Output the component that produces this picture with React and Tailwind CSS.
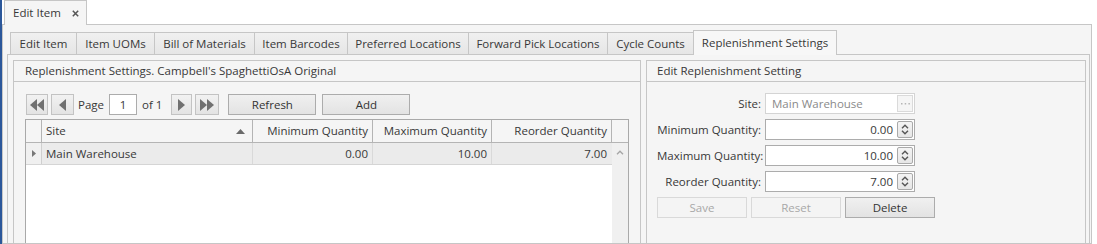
import React from "react";

const DoubleLeft = () => (
  <svg width="14" height="12" viewBox="0 0 14 12"><polygon points="7,0 0,6 7,12" fill="#707070" /><polygon points="14,0 7,6 14,12" fill="#707070" /></svg>
);
const SingleLeft = () => (
  <svg width="7" height="12" viewBox="0 0 7 12"><polygon points="7,0 0,6 7,12" fill="#707070" /></svg>
);
const SingleRight = () => (
  <svg width="7" height="12" viewBox="0 0 7 12"><polygon points="0,0 7,6 0,12" fill="#707070" /></svg>
);
const DoubleRight = () => (
  <svg width="14" height="12" viewBox="0 0 14 12"><polygon points="0,0 7,6 0,12" fill="#707070" /><polygon points="7,0 14,6 7,12" fill="#707070" /></svg>
);

const PagerBtn = ({ w, children }) => (
  <div className={`flex h-[21px] ${w} items-center justify-center border border-[#c3c3c3] bg-linear-to-b from-[#f2f2f2] to-[#e3e3e3]`}>
    {children}
  </div>
);

const Btn = ({ children, disabled, w = "w-[88px]" }) => (
  <div
    className={`flex h-[21px] ${w} items-center justify-center border ${
      disabled
        ? "border-[#d9d9d9] bg-[#f4f4f4] text-[#a8a8a8]"
        : "border-[#acacac] bg-linear-to-b from-[#f0f0f0] to-[#e3e3e3] text-[#333]"
    }`}
  >
    {children}
  </div>
);

const Spinner = () => (
  <div className="mr-[1px] flex h-[17px] w-[16px] flex-col items-center justify-between rounded-[2px] border border-[#a9a9a9] bg-linear-to-b from-[#f4f4f4] to-[#e6e6e6] py-[2px]">
    <svg width="8" height="5" viewBox="0 0 8 5"><polyline points="1,4.2 4,1.2 7,4.2" fill="none" stroke="#555" strokeWidth="1.4" /></svg>
    <svg width="8" height="5" viewBox="0 0 8 5"><polyline points="1,0.8 4,3.8 7,0.8" fill="none" stroke="#555" strokeWidth="1.4" /></svg>
  </div>
);

const NumField = ({ label, value }) => (
  <div className="flex h-[21px] items-center">
    <div className="w-[104px] whitespace-nowrap text-right">{label}</div>
    <div className="ml-[4px] flex h-[21px] w-[150px] items-center border border-[#acacac] bg-white">
      <span className="flex-1 pr-[4px] text-right">{value}</span>
      <Spinner />
    </div>
  </div>
);

const tabs = [
  ["Edit Item", "w-[66px]"],
  ["Item UOMs", "w-[78px]"],
  ["Bill of Materials", "w-[100px]"],
  ["Item Barcodes", "w-[93px]"],
  ["Preferred Locations", "w-[121px]"],
  ["Forward Pick Locations", "w-[139px]"],
  ["Cycle Counts", "w-[86px]"],
];

export default function App() {
  return (
    <div className="flex h-[244px] w-[1097px] overflow-hidden bg-white font-['Open_Sans',sans-serif] text-[11.5px] leading-none text-[#383838]">
      <div className="w-[2px] shrink-0 bg-[#2b579a]" />
      <div className="flex min-w-0 flex-1 flex-col">
        {/* outer document tab */}
        <div className="flex h-[24px] shrink-0 items-end pl-[2px]">
          <div className="relative z-10 -mb-px flex h-[25px] w-[83px] items-center border border-b-0 border-[#c6c6c6] bg-[#f5f5f5] pl-[8px]">
            <span>Edit Item</span>
            <svg className="ml-[11px]" width="7" height="7" viewBox="0 0 7 7">
              <path d="M0.8 0.8 L6.2 6.2 M6.2 0.8 L0.8 6.2" stroke="#555" strokeWidth="1.5" />
            </svg>
          </div>
        </div>

        {/* outer panel */}
        <div className="mr-[5px] flex min-h-0 flex-1 flex-col border border-[#c6c6c6] bg-[#f5f5f5] pl-[4px] pr-[1px] pt-[5px]">
          {/* inner tab strip */}
          <div className="flex h-[24px] shrink-0 items-end pl-[3px]">
            {tabs.map(([t, w]) => (
              <div
                key={t}
                className={`flex h-[22px] ${w} items-center justify-center whitespace-nowrap border-l border-t border-[#c6c6c6] bg-linear-to-b from-[#f0f0f0] to-[#e6e6e6]`}
              >
                {t}
              </div>
            ))}
            <div className="relative z-10 -mb-px flex h-[25px] w-[144px] items-center justify-center whitespace-nowrap border-x border-t border-[#c6c6c6] bg-[#f7f7f7] pb-[1px]">
              Replenishment Settings
            </div>
          </div>

          {/* inner tab content */}
          <div className="flex min-h-0 flex-1 gap-[5px] border-x border-t border-[#c6c6c6] bg-[#f5f5f5] pl-[5px] pr-[3px] pt-[5px]">
            {/* left group */}
            <div className="flex w-[628px] shrink-0 flex-col border-x border-t border-[#c6c6c6]">
              <div className="flex h-[21px] shrink-0 items-center whitespace-nowrap border-b border-[#c6c6c6] pl-[11px]">
                Replenishment Settings. Campbell's SpaghettiOsA Original
              </div>
              <div className="flex min-h-0 flex-1 flex-col pl-[11px] pt-[12px]">
                {/* pager */}
                <div className="ml-[1px] flex h-[21px] items-center">
                  <PagerBtn w="w-[22px]"><DoubleLeft /></PagerBtn>
                  <div className="ml-[3px]"><PagerBtn w="w-[23px]"><SingleLeft /></PagerBtn></div>
                  <span className="ml-[4px]">Page</span>
                  <div className="ml-[5px] flex h-[21px] w-[28px] items-center justify-center border border-[#acacac] bg-white">1</div>
                  <span className="ml-[5px]">of 1</span>
                  <div className="ml-[9px]"><PagerBtn w="w-[21px]"><SingleRight /></PagerBtn></div>
                  <div className="ml-[3px]"><PagerBtn w="w-[24px]"><DoubleRight /></PagerBtn></div>
                  <div className="ml-[9px]"><Btn>Refresh</Btn></div>
                  <div className="ml-[6px]"><Btn>Add</Btn></div>
                </div>

                {/* grid */}
                <div className="mt-[4px] flex w-[604px] flex-1 flex-col border-x border-t border-[#a9a9a9] bg-white">
                  <div className="flex h-[23px] shrink-0 border-b border-[#b4b4b4] bg-[#f5f5f5]">
                    <div className="w-[16px] border-r border-[#b4b4b4]" />
                    <div className="flex w-[211px] items-center justify-between border-r border-[#b4b4b4] pl-[4px] pr-[7px]">
                      <span>Site</span>
                      <svg width="9" height="5" viewBox="0 0 9 5"><polygon points="0,5 4.5,0 9,5" fill="#6a6a6a" /></svg>
                    </div>
                    <div className="flex w-[120px] items-center justify-end whitespace-nowrap border-r border-[#b4b4b4] pr-[4px]">Minimum Quantity</div>
                    <div className="flex w-[119px] items-center justify-end whitespace-nowrap border-r border-[#b4b4b4] pr-[4px]">Maximum Quantity</div>
                    <div className="flex w-[120px] items-center justify-end whitespace-nowrap border-r border-[#b4b4b4] pr-[4px]">Reorder Quantity</div>
                    <div className="flex-1" />
                  </div>
                  <div className="flex min-h-0 flex-1">
                    <div className="flex flex-1 flex-col">
                      <div className="flex h-[22px] border-b border-[#d5d5d5] bg-[#ebebeb]">
                        <div className="flex w-[16px] items-center justify-center border-r border-[#cfcfcf] bg-[#f0f0f0]">
                          <svg width="4" height="7" viewBox="0 0 4 7"><polygon points="0,0 4,3.5 0,7" fill="#777" /></svg>
                        </div>
                        <div className="flex w-[211px] items-center border-r border-[#d9d9d9] pl-[4px]">Main Warehouse</div>
                        <div className="flex w-[120px] items-center justify-end border-r border-[#d9d9d9] pr-[4px]">0.00</div>
                        <div className="flex w-[119px] items-center justify-end border-r border-[#d9d9d9] pr-[4px]">10.00</div>
                        <div className="flex w-[119px] items-center justify-end pr-[4px]">7.00</div>
                      </div>
                    </div>
                    <div className="flex w-[16px] justify-center bg-[#f0f0f0] pt-[7px]">
                      <svg width="8" height="5" viewBox="0 0 8 5"><polyline points="1,4.3 4,1.3 7,4.3" fill="none" stroke="#a6a6a6" strokeWidth="1.4" /></svg>
                    </div>
                  </div>
                </div>
              </div>
            </div>

            {/* right group */}
            <div className="flex min-w-0 flex-1 flex-col border-x border-t border-[#c6c6c6]">
              <div className="flex h-[21px] shrink-0 items-center whitespace-nowrap border-b border-[#c6c6c6] pl-[10px]">
                Edit Replenishment Setting
              </div>
              <div className="flex flex-col gap-[5px] pl-[10px] pt-[11px]">
                <div className="flex h-[21px] items-center">
                  <div className="w-[104px] text-right">Site:</div>
                  <div className="ml-[4px] flex h-[21px] w-[150px] items-center border border-[#d4d4d4] bg-white">
                    <span className="flex-1 pl-[6px] text-[#8a8a8a]">Main Warehouse</span>
                    <div className="mr-[1px] flex h-[17px] w-[16px] items-center justify-center border border-[#dadada] bg-[#f5f5f5]">
                      <svg width="9" height="2" viewBox="0 0 9 2">
                        <rect x="0" y="0" width="1.5" height="1.5" fill="#b5b5b5" />
                        <rect x="3.7" y="0" width="1.5" height="1.5" fill="#b5b5b5" />
                        <rect x="7.4" y="0" width="1.5" height="1.5" fill="#b5b5b5" />
                      </svg>
                    </div>
                  </div>
                </div>
                <NumField label="Minimum Quantity:" value="0.00" />
                <NumField label="Maximum Quantity:" value="10.00" />
                <NumField label="Reorder Quantity:" value="7.00" />
                <div className="flex gap-[4px]">
                  <Btn disabled w="w-[90px]">Save</Btn>
                  <Btn disabled w="w-[90px]">Reset</Btn>
                  <Btn w="w-[90px]">Delete</Btn>
                </div>
              </div>
            </div>
          </div>
        </div>
      </div>
    </div>
  );
}
